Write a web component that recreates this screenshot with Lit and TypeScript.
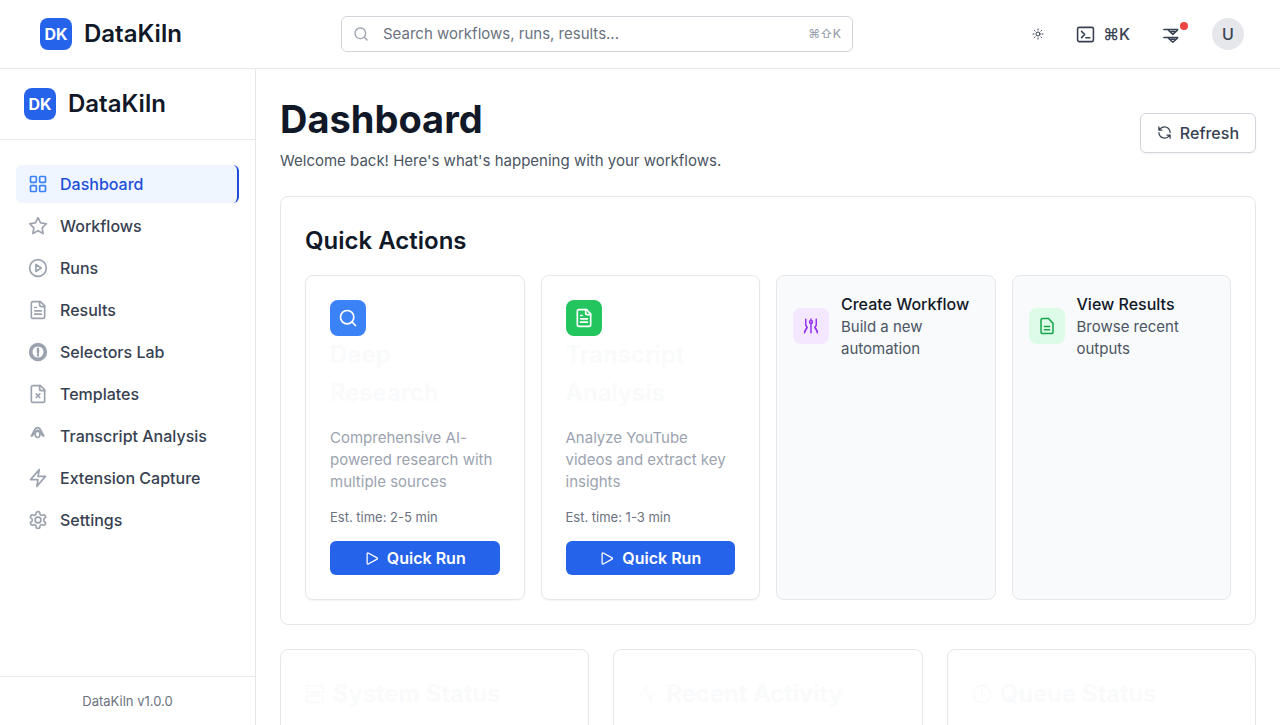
import { LitElement, html, css, svg, nothing, SVGTemplateResult } from "lit";
import { customElement, property } from "lit/decorators.js";

const fileShape = svg`<path d="M15 2H6a2 2 0 0 0-2 2v16a2 2 0 0 0 2 2h12a2 2 0 0 0 2-2V7Z"/><path d="M14 2v4a2 2 0 0 0 2 2h4"/>`;

const icons: Record<string, SVGTemplateResult> = {
  grid: svg`<rect x="3" y="3" width="7" height="7" rx="1"/><rect x="14" y="3" width="7" height="7" rx="1"/><rect x="3" y="14" width="7" height="7" rx="1"/><rect x="14" y="14" width="7" height="7" rx="1"/>`,
  star: svg`<path d="M12 2l3.09 6.26L22 9.27l-5 4.87 1.18 6.88L12 17.77l-6.18 3.25L7 14.14 2 9.27l6.91-1.01Z"/>`,
  playCircle: svg`<circle cx="12" cy="12" r="10"/><path d="M9.5 7.8v8.4L15.8 12Z"/>`,
  file: svg`${fileShape}<path d="M8 9h2M8 13h8M8 17h8"/>`,
  fileX: svg`${fileShape}<path d="m9.8 11.8 4.4 4.4m0-4.4-4.4 4.4"/>`,
  filePlain: svg`<path d="M14 2H6.5A2.5 2.5 0 0 0 4 4.500v15A2.500 2.500 0 0 0 6.500 22h11a2.500 2.500 0 0 0 2.500-2.500V8.500Z"/><path d="M8.500 12.500h7M8.500 17h7"/>`,
  lab: svg`<circle cx="12" cy="12" r="8.800" stroke-width="4.400"/><path d="M12 8v4.500" stroke-width="3"/><path d="M12 15v1.500" stroke-width="2.600"/>`,
  hood: svg`<path d="M4.500 11.500 7 9M18.500 11.500 16 9" stroke-width="3"/><path d="M5.500 9.500c.8-2 1.500-4.500 3-5.500M17.500 9.500c-.8-2-1.500-4.500-3-5.500"/><path d="M8 5.500C8.500 3 10 2 11.500 2S14.500 3 15 5.500"/><path d="M8 7.500 11.500 5 15 7.500"/><ellipse cx="11.500" cy="10" rx="2.800" ry="3.800"/>`,
  bolt: svg`<path d="M13.500 2 3 14h9l-1.500 8L21 10h-9Z"/>`,
  gear: svg`<path d="M12.220 2h-.440a2 2 0 0 0-2 2v.180a2 2 0 0 1-1 1.730l-.430.250a2 2 0 0 1-2 0l-.150-.080a2 2 0 0 0-2.730.730l-.220.380a2 2 0 0 0 .730 2.730l.150.100a2 2 0 0 1 1 1.720v.510a2 2 0 0 1-1 1.740l-.150.090a2 2 0 0 0-.730 2.730l.220.380a2 2 0 0 0 2.730.730l.150-.080a2 2 0 0 1 2 0l.430.250a2 2 0 0 1 1 1.730V20a2 2 0 0 0 2 2h.440a2 2 0 0 0 2-2v-.180a2 2 0 0 1 1-1.730l.430-.250a2 2 0 0 1 2 0l.150.080a2 2 0 0 0 2.730-.730l.220-.390a2 2 0 0 0-.730-2.730l-.150-.080a2 2 0 0 1-1-1.740v-.500a2 2 0 0 1 1-1.740l.150-.090a2 2 0 0 0 .730-2.730l-.220-.380a2 2 0 0 0-2.730-.730l-.150.080a2 2 0 0 1-2 0l-.430-.250a2 2 0 0 1-1-1.730V4a2 2 0 0 0-2-2z"/><circle cx="12" cy="12" r="3.500"/>`,
  search: svg`<circle cx="11" cy="11" r="8"/><path d="m21 21-4.300-4.300"/>`,
  sun: svg`<circle cx="12" cy="12" r="4"/><path d="M12 2v2M12 20v2M2 12h2M20 12h2M5 5l1.200 1.200M17.800 17.800 19 19M5 19l1.200-1.200M17.800 6.200 19 5"/>`,
  terminal: svg`<rect x="2" y="3" width="20" height="18" rx="2"/><path d="m7 8 4 4-4 4M12.500 16h5"/>`,
  bell: svg`<path d="M2.500 6H21M8.500 7l6 5.500L20.500 7M12 8.500h5M2.500 16.500H21M8.500 17.500l6 5.500 6-5.500M12 19h5"/>`,
  refresh: svg`<path d="M21 12a9 9 0 0 0-9-9 9.750 9.750 0 0 0-6.740 2.740L3 8M3 3v5h5M3 12a9 9 0 0 0 9 9 9.750 9.750 0 0 0 6.740-2.740L21 16M16 16h5v5"/>`,
  play: svg`<path d="M5 4.200v15.600a1.200 1.200 0 0 0 1.800 1L21 13a1.200 1.200 0 0 0 0-2L6.800 3.200A1.200 1.200 0 0 0 5 4.200Z"/>`,
  sliders: svg`<path d="M5 3v8l2 3-2 3-1.500 4M5.500 15.500l-2 4M12 8v13M19 3v8l-2 3 2 3 1.500 4M18.500 15.500l2 4"/><circle cx="12" cy="6.500" r="2"/><path d="M12 2.500v1"/>`,
  server: svg`<rect x="2" y="2" width="20" height="8" rx="2"/><rect x="2" y="14" width="20" height="8" rx="2"/>`,
  activity: svg`<path d="M22 12h-2.500a2 2 0 0 0-1.900 1.500L15.200 21.500 9 2.500l-2.500 8A2 2 0 0 1 4.500 12H2"/>`,
  clock: svg`<circle cx="12" cy="12" r="10"/><path d="M12 6v6l4 2"/>`,
};

@customElement("ui-icon")
class UiIcon extends LitElement {
  @property() name = "";
  @property({ type: Number }) size = 20;
  @property({ type: Number }) stroke = 2;
  static styles = css`
    :host { display: inline-flex; flex: none; }
    svg { display: block; overflow: visible; }
  `;
  render() {
    return html`<svg width=${this.size} height=${this.size} viewBox="0 0 24 24" fill="none" stroke="currentColor"
      stroke-width=${this.stroke} stroke-linecap="round" stroke-linejoin="round" aria-hidden="true">${icons[this.name] ?? nothing}</svg>`;
  }
}

const navItems = [
  { label: "Dashboard", icon: "grid" },
  { label: "Workflows", icon: "star" },
  { label: "Runs", icon: "playCircle" },
  { label: "Results", icon: "file" },
  { label: "Selectors Lab", icon: "lab" },
  { label: "Templates", icon: "fileX" },
  { label: "Transcript Analysis", icon: "hood" },
  { label: "Extension Capture", icon: "bolt" },
  { label: "Settings", icon: "gear" },
];

const runs = [
  { title: "Deep Research", text: "Comprehensive AI-powered research with multiple sources", time: "2-5 min", icon: "search", tone: "blue" },
  { title: "Transcript Analysis", text: "Analyze YouTube videos and extract key insights", time: "1-3 min", icon: "file", tone: "green" },
];

const links = [
  { title: "Create Workflow", text: "Build a new automation", icon: "sliders", tone: "purple" },
  { title: "View Results", text: "Browse recent outputs", icon: "filePlain", tone: "mint" },
];

const panels = [
  { title: "System Status", icon: "server" },
  { title: "Recent Activity", icon: "activity" },
  { title: "Queue Status", icon: "clock" },
];

@customElement("app-root")
class AppRoot extends LitElement {
  static styles = css`
    :host {
      display: flex;
      flex-direction: column;
      height: 100vh;
      overflow: hidden;
      background: #fff;
      color: #111827;
      font: 400 15px/22px Inter, "Liberation Sans", sans-serif;
    }
    * { box-sizing: border-box; }
    h1, h2, h3, p, ul { margin: 0; padding: 0; }
    button { font: inherit; color: inherit; border: 0; background: none; padding: 0; cursor: pointer; }
    a { color: inherit; text-decoration: none; }

    .topbar {
      display: flex;
      align-items: center;
      justify-content: space-between;
      flex: none;
      padding: 16px 36px 16px 40px;
      border-bottom: 1px solid #e5e7eb;
    }
    .brand { display: flex; align-items: center; gap: 12px; font-size: 24px; line-height: 34px; font-weight: 600; }
    .mark {
      display: grid;
      place-items: center;
      width: 32px;
      height: 32px;
      border-radius: 8px;
      background: #2563eb;
      color: #fff;
      font-size: 16px;
      line-height: 32px;
      font-weight: 700;
    }
    .search {
      display: flex;
      align-items: center;
      flex: 0 1 512px;
      gap: 14px;
      height: 36px;
      padding: 0 11px;
      border: 1px solid #d1d5db;
      border-radius: 6px;
      color: #9ca3af;
    }
    .search input { flex: 1; min-width: 0; border: 0; outline: 0; padding: 0; background: none; font: inherit; color: #111827; }
    .search input::placeholder { color: #6b7280; opacity: 1; }
    .search kbd { font: inherit; font-size: 12px; font-weight: 500; }
    .tools { display: flex; align-items: center; color: #374151; font-size: 16px; font-weight: 500; }
    .tool { display: flex; align-items: center; gap: 8px; height: 36px; padding: 0 12px; }
    .tool.theme { padding: 0 20px; }
    .tool.alerts { position: relative; padding: 0 20px; margin-right: 12px; }
    .dot { position: absolute; top: 6px; right: 12px; width: 8px; height: 8px; border-radius: 50%; background: #ef4444; }
    .avatar { width: 32px; height: 32px; border-radius: 50%; background: #e5e7eb; }

    .body { display: flex; flex: 1; min-height: 0; }
    .sidebar { display: flex; flex-direction: column; flex: none; width: 256px; border-right: 1px solid #e5e7eb; }
    .sidebar .brand { padding: 18px 24px; border-bottom: 1px solid #e8eaed; }
    .nav { flex: 1; padding: 25px 16px; }
    .nav ul { display: flex; flex-direction: column; gap: 4px; list-style: none; }
    .nav a {
      display: flex;
      align-items: center;
      gap: 12px;
      padding: 8px 12px;
      border-radius: 6px;
      font-size: 16px;
      font-weight: 500;
      color: #374151;
    }
    .nav ui-icon { color: #9ca3af; }
    .nav .current { background: #eff6ff; color: #1d4ed8; border-right: 2px solid #1d4ed8; }
    .nav .current ui-icon { color: #3b82f6; }
    .version { padding: 16px; border-top: 1px solid #e8eaed; text-align: center; font-size: 13px; line-height: 16px; color: #6b7280; }

    .main { flex: 1; min-width: 0; padding: 24px; overflow-y: auto; scrollbar-width: none; }
    .heading { display: flex; align-items: center; justify-content: space-between; margin-bottom: 24px; }
    h1 { font-size: 38px; line-height: 53px; font-weight: 700; margin-bottom: 4px; }
    .heading p { color: #4b5563; }
    .refresh {
      display: flex;
      align-items: center;
      gap: 8px;
      height: 40px;
      padding: 0 16px;
      border: 1px solid #d1d5db;
      border-radius: 6px;
      background: #fff;
      box-shadow: 0 1px 2px rgba(0, 0, 0, 0.05);
      color: #374151;
      font-size: 16px;
      font-weight: 500;
    }
    .card { border: 1px solid #e5e7eb; border-radius: 8px; padding: 24px; }
    h2 { font-size: 24px; line-height: 40px; font-weight: 600; }
    .actions { display: grid; grid-template-columns: repeat(4, minmax(0, 1fr)); gap: 16px; margin-top: 14px; }
    .raised { box-shadow: 0 1px 2px rgba(0, 0, 0, 0.05); }
    .run { display: flex; flex-direction: column; align-items: flex-start; }
    .run h3 { font-size: 24px; line-height: 38px; font-weight: 600; color: #f9fafb; margin-bottom: 15px; }
    .run .text { color: #9ca3af; }
    .run .time { font-size: 13px; line-height: 24px; color: #6b7280; margin: 12px 0; }
    .badge { display: grid; place-items: center; flex: none; width: 36px; height: 36px; border-radius: 8px; }
    .blue { background: #3b82f6; color: #fff; }
    .green { background: #22c55e; color: #fff; }
    .purple { background: #f3e8ff; color: #9333ea; }
    .mint { background: #dcfce7; color: #16a34a; }
    .start {
      display: flex;
      align-items: center;
      justify-content: center;
      gap: 8px;
      width: 100%;
      height: 34px;
      border-radius: 6px;
      background: #2563eb;
      color: #fff;
      font-size: 16px;
      font-weight: 600;
    }
    .link { display: flex; align-items: flex-start; padding: 16px; background: #f9fafb; }
    .link .row { display: flex; align-items: center; gap: 12px; }
    .link h3 { font-size: 16px; line-height: 24px; font-weight: 500; white-space: nowrap; }
    .link p { color: #4b5563; }
    .panels { display: grid; grid-template-columns: repeat(3, minmax(0, 1fr)); gap: 24px; margin-top: 24px; }
    .panel { min-height: 200px; color: #f9fafb; }
    .panel h2 { display: flex; align-items: center; gap: 8px; white-space: nowrap; }
  `;

  brand() {
    return html`<div class="brand"><span class="mark">DK</span><span>DataKiln</span></div>`;
  }

  render() {
    return html`
      <header class="topbar">
        ${this.brand()}
        <label class="search">
          <ui-icon name="search" size="16"></ui-icon>
          <input type="text" aria-label="Search" placeholder="Search workflows, runs, results..." />
          <kbd>⌘⇧K</kbd>
        </label>
        <div class="tools">
          <button class="tool theme" aria-label="Toggle theme"><ui-icon name="sun" size="12"></ui-icon></button>
          <button class="tool"><ui-icon name="terminal" size="19"></ui-icon>⌘K</button>
          <button class="tool alerts" aria-label="Notifications"><ui-icon name="bell" size="18"></ui-icon><span class="dot"></span></button>
          <button class="avatar" aria-label="Account">U</button>
        </div>
      </header>
      <div class="body">
        <aside class="sidebar">
          ${this.brand()}
          <nav class="nav">
            <ul>
              ${navItems.map((n, i) => html`<li><a href="#" class=${i === 0 ? "current" : ""}><ui-icon name=${n.icon}></ui-icon>${n.label}</a></li>`)}
            </ul>
          </nav>
          <div class="version">DataKiln v1.0.0</div>
        </aside>
        <main class="main">
          <div class="heading">
            <div>
              <h1>Dashboard</h1>
              <p>Welcome back! Here's what's happening with your workflows.</p>
            </div>
            <button class="refresh"><ui-icon name="refresh" size="15"></ui-icon>Refresh</button>
          </div>
          <section class="card">
            <h2>Quick Actions</h2>
            <div class="actions">
              ${runs.map((r) => html`
                <article class="card raised run">
                  <span class="badge ${r.tone}"><ui-icon name=${r.icon}></ui-icon></span>
                  <h3>${r.title}</h3>
                  <p class="text">${r.text}</p>
                  <p class="time">Est. time: ${r.time}</p>
                  <button class="start"><ui-icon name="play" size="15"></ui-icon>Quick Run</button>
                </article>`)}
              ${links.map((l) => html`
                <a class="card link" href="#">
                  <div class="row">
                    <span class="badge ${l.tone}"><ui-icon name=${l.icon} size="18"></ui-icon></span>
                    <div><h3>${l.title}</h3><p>${l.text}</p></div>
                  </div>
                </a>`)}
            </div>
          </section>
          <div class="panels">
            ${panels.map((p) => html`<section class="card panel"><h2><ui-icon name=${p.icon}></ui-icon>${p.title}</h2></section>`)}
          </div>
        </main>
      </div>
    `;
  }
}
